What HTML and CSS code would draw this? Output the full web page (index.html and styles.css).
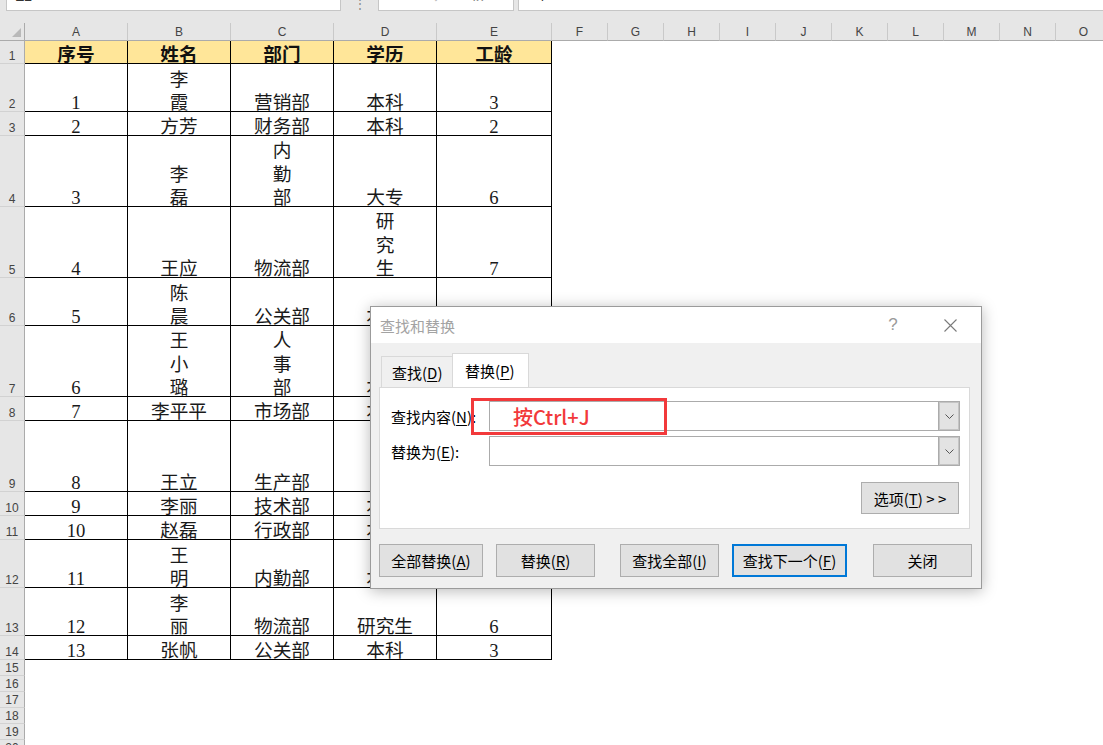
FILE: index.html
```html
<!DOCTYPE html>
<html lang="zh-CN">
<head>
<meta charset="utf-8">
<title>查找和替换</title>
<link rel="stylesheet" href="styles.css">
</head>
<body>
<div class="topbar">
  <div class="namebox"><span class="cut">E2</span></div>
  <div class="dots">⋮</div>
  <div class="fxbtns"><span class="cut">✕</span><span class="cut">✓</span><span class="cut fx">fx</span></div>
  <div class="formula"><span class="cut">4</span></div>
</div>

<div class="sheet">
  <div class="corner"><span class="tri"></span></div>
  <div class="ch">A</div><div class="ch">B</div><div class="ch">C</div><div class="ch">D</div><div class="ch">E</div>
  <div class="ch">F</div><div class="ch">G</div><div class="ch">H</div><div class="ch">I</div><div class="ch">J</div>
  <div class="ch">K</div><div class="ch">L</div><div class="ch">M</div><div class="ch">N</div><div class="ch">O</div>

  <div class="rh">1</div>
  <div class="c h"><span>序号</span></div><div class="c h"><span>姓名</span></div><div class="c h"><span>部门</span></div><div class="c h"><span>学历</span></div><div class="c h"><span>工龄</span></div>
  <div class="rest"></div>

  <div class="rh">2</div>
  <div class="c n"><span>1</span></div><div class="c"><span>李<br>霞</span></div><div class="c"><span>营销部</span></div><div class="c"><span>本科</span></div><div class="c n"><span>3</span></div>
  <div class="rest"></div>

  <div class="rh">3</div>
  <div class="c n"><span>2</span></div><div class="c"><span>方芳</span></div><div class="c"><span>财务部</span></div><div class="c"><span>本科</span></div><div class="c n"><span>2</span></div>
  <div class="rest"></div>

  <div class="rh">4</div>
  <div class="c n"><span>3</span></div><div class="c"><span>李<br>磊</span></div><div class="c"><span>内<br>勤<br>部</span></div><div class="c"><span>大专</span></div><div class="c n"><span>6</span></div>
  <div class="rest"></div>

  <div class="rh">5</div>
  <div class="c n"><span>4</span></div><div class="c"><span>王应</span></div><div class="c"><span>物流部</span></div><div class="c"><span>研<br>究<br>生</span></div><div class="c n"><span>7</span></div>
  <div class="rest"></div>

  <div class="rh">6</div>
  <div class="c n"><span>5</span></div><div class="c"><span>陈<br>晨</span></div><div class="c"><span>公关部</span></div><div class="c"><span>本科</span></div><div class="c n"><span>4</span></div>
  <div class="rest"></div>

  <div class="rh">7</div>
  <div class="c n"><span>6</span></div><div class="c"><span>王<br>小<br>璐</span></div><div class="c"><span>人<br>事<br>部</span></div><div class="c"><span>本科</span></div><div class="c n"><span>5</span></div>
  <div class="rest"></div>

  <div class="rh">8</div>
  <div class="c n"><span>7</span></div><div class="c"><span>李平平</span></div><div class="c"><span>市场部</span></div><div class="c"><span>本科</span></div><div class="c n"><span>3</span></div>
  <div class="rest"></div>

  <div class="rh">9</div>
  <div class="c n"><span>8</span></div><div class="c"><span>王立</span></div><div class="c"><span>生产部</span></div><div class="c"><span>研<br>究<br>生</span></div><div class="c n"><span>8</span></div>
  <div class="rest"></div>

  <div class="rh">10</div>
  <div class="c n"><span>9</span></div><div class="c"><span>李丽</span></div><div class="c"><span>技术部</span></div><div class="c"><span>本科</span></div><div class="c n"><span>2</span></div>
  <div class="rest"></div>

  <div class="rh">11</div>
  <div class="c n"><span>10</span></div><div class="c"><span>赵磊</span></div><div class="c"><span>行政部</span></div><div class="c"><span>本科</span></div><div class="c n"><span>4</span></div>
  <div class="rest"></div>

  <div class="rh">12</div>
  <div class="c n"><span>11</span></div><div class="c"><span>王<br>明</span></div><div class="c"><span>内勤部</span></div><div class="c"><span>本科</span></div><div class="c n"><span>3</span></div>
  <div class="rest"></div>

  <div class="rh">13</div>
  <div class="c n"><span>12</span></div><div class="c"><span>李<br>丽</span></div><div class="c"><span>物流部</span></div><div class="c"><span>研究生</span></div><div class="c n"><span>6</span></div>
  <div class="rest"></div>

  <div class="rh">14</div>
  <div class="c n"><span>13</span></div><div class="c"><span>张帆</span></div><div class="c"><span>公关部</span></div><div class="c"><span>本科</span></div><div class="c n"><span>3</span></div>
  <div class="rest"></div>

  <div class="rh">15</div><div class="blank"></div>
  <div class="rh">16</div><div class="blank"></div>
  <div class="rh">17</div><div class="blank"></div>
  <div class="rh">18</div><div class="blank"></div>
  <div class="rh">19</div><div class="blank"></div>
  <div class="rh">20</div><div class="blank"></div>
</div>

<div class="dialog">
  <div class="titlebar">
    <span class="title">查找和替换</span>
    <span class="help">?</span>
    <span class="close"><svg width="13" height="13" viewBox="0 0 13 13"><path d="M0.5 0.5 L12.5 12.5 M12.5 0.5 L0.5 12.5" stroke="#7a7a7a" stroke-width="1.1" fill="none"/></svg></span>
  </div>
  <div class="dbody">
    <div class="tabs">
      <div class="tab">查找(<u>D</u>)</div>
      <div class="tab active">替换(<u>P</u>)</div>
    </div>
    <div class="panel">
      <div class="frow">
        <span class="lbl">查找内容(<u>N</u>):</span>
        <div class="combo"><div class="cin"></div><div class="cbtn"><svg width="9" height="5" viewBox="0 0 9 5"><polyline points="0.5,0.5 4.5,4.5 8.5,0.5" stroke="#555" stroke-width="1" fill="none"/></svg></div></div>
      </div>
      <div class="frow">
        <span class="lbl">替换为(<u>E</u>):</span>
        <div class="combo"><div class="cin"></div><div class="cbtn"><svg width="9" height="5" viewBox="0 0 9 5"><polyline points="0.5,0.5 4.5,4.5 8.5,0.5" stroke="#555" stroke-width="1" fill="none"/></svg></div></div>
      </div>
      <div class="optrow"><div class="btn opt">选项(<u>T</u>) &gt; &gt;</div></div>
    </div>
    <div class="btns">
      <div class="btn b1">全部替换(<u>A</u>)</div>
      <div class="btn b2">替换(<u>R</u>)</div>
      <div class="btn b3">查找全部(<u>I</u>)</div>
      <div class="btn b4 focus">查找下一个(<u>F</u>)</div>
      <div class="btn b5">关闭</div>
    </div>
  </div>
  <div class="annot">按Ctrl+J</div>
</div>
</body>
</html>
```

FILE: styles.css
```css
* { box-sizing: border-box; margin: 0; padding: 0; }
html, body { width: 1103px; height: 745px; overflow: hidden; background: #fff; }
body { position: relative; font-family: "Noto Sans CJK SC", sans-serif; color: #000; }

/* ---------- top strip ---------- */
.topbar { height: 23px; background: #e6e6e6; display: flex; align-items: flex-start; }
.namebox { margin-left: 6px; width: 335px; height: 11px; background: #fff; border: 1px solid #c6c6c6; border-top: 0; overflow: hidden; padding-left: 8px; }
.cut { display: block; font-family: "Liberation Sans", sans-serif; font-size: 14px; line-height: 14px; margin-top: -11px; color: #333; }
.dots { width: 37px; height: 11px; overflow: hidden; text-align: center; font-size: 12px; line-height: 6px; color: #888; }
.fxbtns { width: 136px; height: 11px; background: #fff; border: 1px solid #c6c6c6; border-top: 0; overflow: hidden; display: flex; gap: 30px; padding-left: 12px; }
.fxbtns .cut { color: #c0c0c0; }
.fxbtns .fx { color: #888; font-style: italic; }
.formula { margin-left: 4px; flex: 1; height: 11px; background: #fff; border: 1px solid #c6c6c6; border-top: 0; border-right: 0; overflow: hidden; padding-left: 18px; }

/* ---------- sheet ---------- */
.sheet {
  display: grid;
  width: 1112px;
  grid-template-columns: 25px 103px 103px 103px 103px 115px repeat(10, 56px);
  grid-template-rows: 18px 23px 48px 24px 71px 71px 48px 71px 24px 71px 24px 24px 48px 48px 24px 16px 16px 16px 16px 16px 16px;
}
.corner { background: #e6e6e6; border-right: 1px solid #ababab; border-bottom: 1px solid #ababab; display: flex; align-items: flex-end; justify-content: flex-end; padding: 0 3px 3px 0; }
.tri { width: 0; height: 0; border-left: 9px solid transparent; border-bottom: 9px solid #b9b9b9; }
.ch { background: #e6e6e6; border-right: 1px solid #c9c9c9; border-bottom: 1px solid #ababab; display: flex; align-items: center; justify-content: center; font-family: "Liberation Sans", sans-serif; font-size: 12px; color: #444; }
.rh { background: #e6e6e6; border-right: 1px solid #ababab; border-bottom: 1px solid #d2d2d2; display: flex; align-items: flex-end; justify-content: center; font-family: "Liberation Sans", sans-serif; font-size: 12px; line-height: 12px; color: #444; padding-bottom: 1px; }

.c { border-right: 1px solid #000; border-bottom: 1px solid #000; display: flex; align-items: flex-end; justify-content: center; text-align: center; font-family: "Noto Sans CJK SC", sans-serif; font-size: 18.67px; line-height: 23.67px; color: #1a1a1a; }
.c span { display: block; margin-bottom: -2px; }
.c.n { font-family: "Liberation Serif", serif; }
.c.n span { margin-bottom: -4px; }
.c.h { background: #ffe699; font-weight: 700; color: #111; }
.rest { grid-column: span 10; }
.blank { grid-column: span 15; }

/* ---------- dialog ---------- */
.dialog { position: absolute; left: 370px; top: 306px; width: 612px; height: 283px; border: 1px solid #9b9b9b; background: #f0f0f0; box-shadow: 0 2px 14px rgba(0,0,0,0.28); font-size: 15px; display: flex; flex-direction: column; }
.titlebar { height: 36px; background: #fff; display: flex; align-items: center; padding-left: 9px; }
.title { color: #a3a3a3; flex: 1; }
.help { width: 20px; text-align: center; font-family: "Liberation Sans", sans-serif; font-size: 17px; color: #9a9a9a; margin-right: 37px; }
.close { width: 20px; height: 13px; display: flex; justify-content: center; margin-right: 21px; }
.close svg { display: block; }

.dbody { flex: 1; display: flex; flex-direction: column; padding-left: 8px; }
.tabs { display: flex; align-items: flex-end; height: 44px; padding-left: 2px; }
.tab { width: 71px; height: 31px; padding-left: 10px; display: flex; align-items: center; border: 1px solid #d9d9d9; border-bottom: 0; border-right: 0; background: #f0f0f0; }
.tab.active { width: 77px; height: 35px; padding-left: 12px; background: #fff; border-right: 1px solid #d9d9d9; margin-bottom: -1px; padding-bottom: 1px; }
.panel { width: 591px; height: 142px; background: #fff; border: 1px solid #d9d9d9; padding: 13px 9px 0 11px; display: flex; flex-direction: column; }
.frow { display: flex; align-items: center; height: 30px; margin-bottom: 5px; }
.lbl { width: 98px; }
.combo { width: 471px; height: 30px; border: 1px solid #ababab; background: #fff; display: flex; }
.cin { flex: 1; }
.cbtn { width: 21px; background: #e3e3e3; border-left: 1px solid #ababab; box-shadow: inset 0 0 0 1px #c4c4c4; display: flex; align-items: center; justify-content: center; }
.cbtn svg { display: block; }
.optrow { display: flex; justify-content: flex-end; margin-top: 11px; padding-right: 1px; }

.btn { height: 32px; background: #e1e1e1; border: 1px solid #adadad; display: flex; align-items: center; justify-content: center; color: #000; }
.opt { width: 98px; }
.btns { display: flex; margin-top: 15px; }
.btns .btn { height: 33px; }
.b1 { width: 104px; }
.b2 { width: 99px; margin-left: 13px; }
.b3 { width: 99px; margin-left: 25px; }
.b4 { width: 115px; margin-left: 13px; }
.b5 { width: 99px; margin-left: 26px; }
.focus { border: 2px solid #0078d7; }
u { text-underline-offset: 2px; }

.annot { position: absolute; left: 100px; top: 91px; width: 196px; height: 37px; border: 3px solid #f2393b; color: #f2393b; font-size: 20px; font-weight: 500; display: flex; align-items: center; padding-left: 39px; line-height: 1; }
```
